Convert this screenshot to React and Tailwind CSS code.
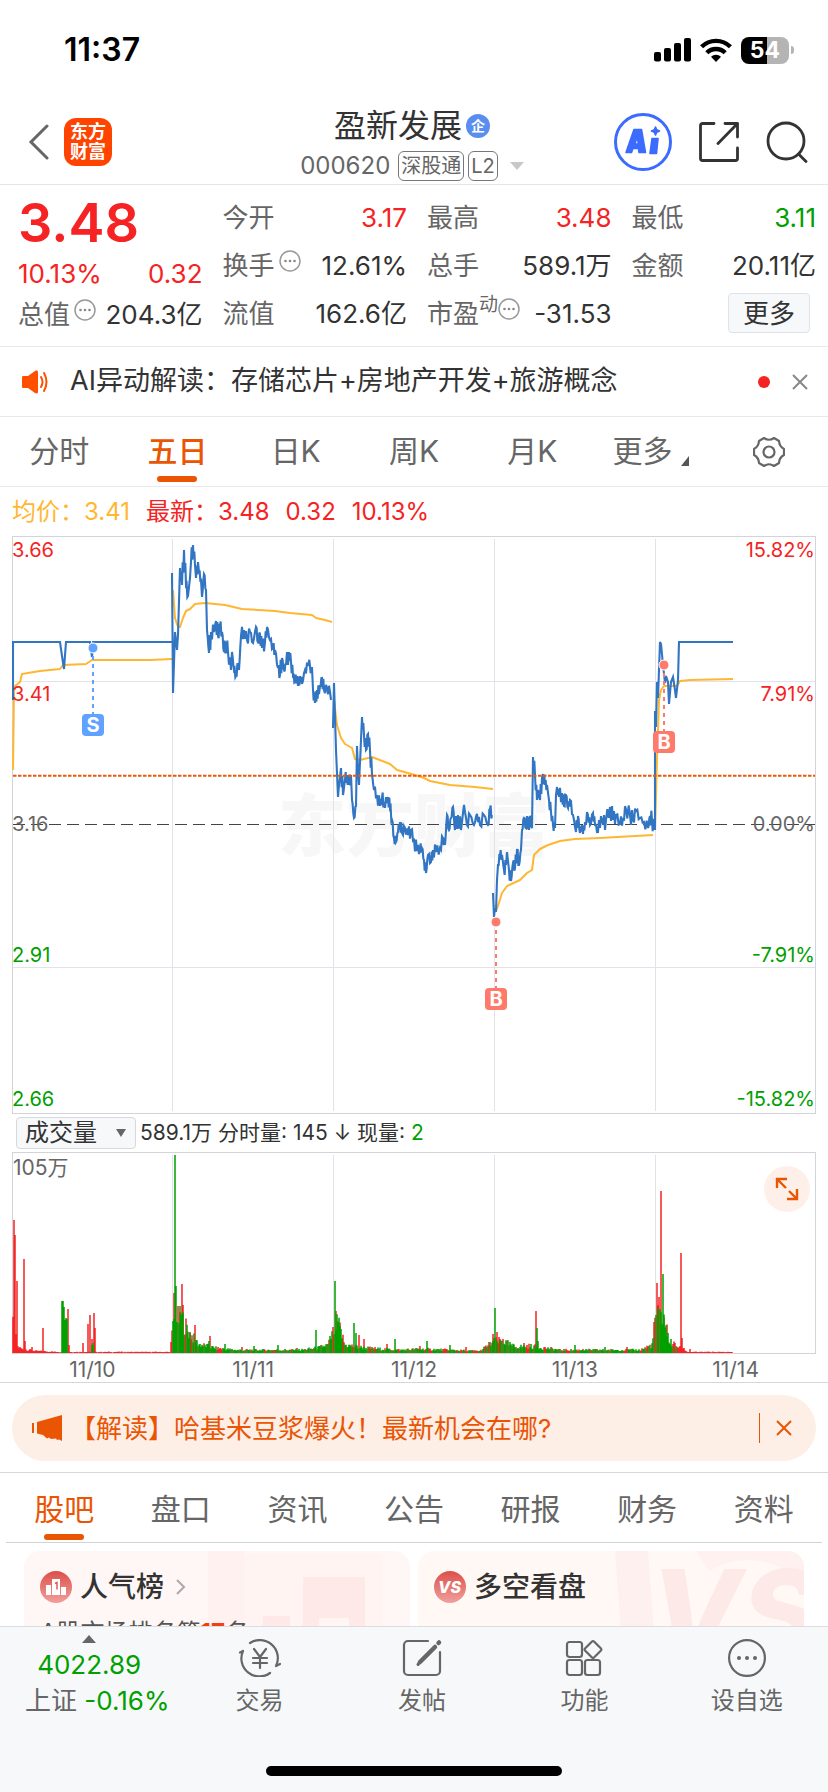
import React from "react";

const quoteColumns = [
  [
    { label: "今开", value: "3.17", tone: "text-[#f52323]" },
    { label: "换手", value: "12.61%", tone: "text-[#333333]", info: true },
    { label: "流值", value: "162.6亿", tone: "text-[#333333]" },
  ],
  [
    { label: "最高", value: "3.48", tone: "text-[#f52323]" },
    { label: "总手", value: "589.1万", tone: "text-[#333333]" },
    { label: "市盈", sup: "动", value: "-31.53", tone: "text-[#333333]", info: true },
  ],
  [
    { label: "最低", value: "3.11", tone: "text-[#00a000]" },
    { label: "金额", value: "20.11亿", tone: "text-[#333333]" },
  ],
];

const sections = ["股吧", "盘口", "资讯", "公告", "研报", "财务", "资料"];
const days = ["11/10", "11/11", "11/12", "11/13", "11/14"];

// price series, one polyline per trading day
const priceDays = [
  {
    noise: 0,
    points:
      "13,700 13,642 60,642 62,656 64,669 66,642 90,642 92,657 93,642 173,642",
  },
  {
    noise: 5,
    points:
      "172,573 173,693 175,632 177,650 178,635 180,568 182,585 184,550 186,585 188,596 190,578 191,562 193,545 195,565 196,578 198,562 199,572 201,580 202,597 204,574 206,590 207,630 209,653 211,632 214,632 216,621 218,636 220,626 222,632 224,652 226,642 228,652 231,670 232,652 234,670 236,676 238,664 239,670 241,636 244,630 247,640 250,632 253,643 256,627 258,642 260,634 262,648 265,642 267,627 270,640 273,648 275,650 278,668 280,675 282,658 284,670 286,665 289,652 291,662 293,676 295,682 297,676 298,686 300,676 302,684 305,670 308,666 312,667 313,690 315,703 317,690 319,694 320,686 322,678 324,690 327,688 330,692 331,700",
  },
  {
    noise: 5,
    points:
      "333,728 334,683 336,750 338,797 339,785 341,768 343,795 345,780 347,775 349,785 351,775 352,800 354,818 356,806 357,746 358,770 359,785 361,740 362,717 364,735 366,750 368,734 370,750 372,775 374,790 377,795 380,806 382,798 384,802 387,803 388,797 390,808 392,820 394,838 396,842 398,832 400,822 402,833 405,828 408,835 411,830 414,840 417,851 420,848 422,848 424,860 426,873 428,855 431,862 433,850 436,852 440,848 443,838 445,845 447,815 449,830 451,818 453,807 455,830 458,815 461,830 464,805 467,825 470,815 474,825 477,814 480,825 484,815 488,825 490,809 492,815",
  },
  {
    noise: 5,
    points:
      "493,893 494,917 495,908 496,912 497,880 498,865 500,855 502,855 504,870 506,865 507,852 509,870 511,881 513,863 515,868 517,850 519,865 521,850 522,830 524,818 526,828 527,816 529,830 530,816 532,828 533,757 535,775 537,800 538,790 540,800 542,778 543,774 545,785 547,785 549,800 551,812 553,825 555,828 556,795 557,787 559,797 562,793 564,806 566,795 568,808 570,800 573,815 576,832 578,816 580,833 582,825 583,834 585,822 588,815 590,825 593,813 595,825 598,832 601,816 603,825 606,820 610,807 613,820 616,815 620,824 623,818 626,809 630,815 633,820 636,811 640,818 644,822 648,828 650,816 652,820 654,830",
  },
  {
    noise: 0,
    points:
      "655,830 655,711 656,727 657,682 658,698 660,642 661,644 663,665 665,683 666,676 668,682 669,704 671,682 673,677 675,690 676,698 678,680 679,642 733,642",
  },
];

const averageDays = [
  "13,770 14,690 15,686 20,682 22,674 40,671 60,669 63,665 86,664 92,660 150,660 172,659",
  "173,590 175,618 178,627 180,627 183,618 186,611 190,609 195,604 205,603 225,605 242,609 275,611 290,613 312,615 316,618 325,620 332,622",
  "334,700 337,725 341,738 345,744 352,748 355,759 360,760 372,757 390,764 397,770 408,773 418,776 424,778 430,781 450,785 475,787 493,789",
  "494,905 497,909 502,893 507,886 520,880 527,873 532,870 534,855 540,849 548,845 560,841 575,839 600,838 653,835",
  "655,830 657,760 659,700 661,690 664,686 677,686 680,681 690,680 733,679",
];

const volumeEnvelope = [
  [13, 26], [18, 6], [22, 4], [36, 2], [60, 1], [170, 1], [174, 34], [182, 34],
  [188, 22], [198, 9], [215, 5], [235, 3], [300, 3], [318, 5], [328, 8],
  [332, 18], [338, 30], [345, 8], [365, 5], [400, 3], [420, 4], [480, 2],
  [493, 11], [502, 12], [515, 6], [530, 7], [545, 5], [560, 3], [640, 3],
  [652, 8], [656, 38], [664, 34], [670, 11], [682, 4], [688, 1], [733, 1],
];

const volumeSpikes = {
  up: [
    [14, 133], [15, 118], [17, 72], [24, 94], [25, 12], [32, 6], [43, 25], [68, 44],
    [69, 8], [83, 10], [88, 29], [90, 38], [92, 14], [94, 40], [95, 25], [174, 60],
    [180, 41], [182, 69], [183, 48], [186, 32], [195, 28], [210, 17], [242, 6],
    [297, 5], [331, 13], [333, 25], [336, 42], [342, 14], [359, 18], [364, 14],
    [387, 9], [420, 7], [466, 6], [493, 19], [497, 21], [500, 14], [503, 14], [524, 10],
    [536, 42], [583, 4], [627, 6], [654, 20], [657, 70], [659, 56], [661, 162],
    [664, 35], [681, 100], [682, 15], [684, 5], [690, 4],
  ],
  down: [
    [62, 52], [63, 52], [64, 46], [65, 33], [66, 35], [67, 34], [92, 8], [93, 10],
    [175, 198], [176, 67], [181, 38], [187, 24], [190, 20], [196, 13], [209, 12],
    [225, 9], [254, 7], [278, 8], [316, 23], [335, 72], [337, 31], [338, 31],
    [340, 27], [354, 30], [356, 20], [395, 14], [427, 12], [450, 8], [495, 45],
    [513, 9], [537, 25], [538, 12], [575, 8], [605, 6], [656, 38], [658, 45],
    [660, 35], [663, 79], [665, 25], [667, 17], [671, 14],
  ],
};

const random = (seed) => {
  const n = Math.sin(seed * 12.9898) * 43758.5453;
  return n - Math.floor(n);
};

const parse = (text) => text.split(" ").map((p) => p.split(",").map(Number));

function pricePath({ points, noise }) {
  const list = parse(points);
  let d = `M${list[0].join(" ")}`;
  list.slice(1).forEach(([x, y], i) => {
    const [px, py] = list[i];
    if (noise && x - px > 1 && i > 4) {
      const swing = (random(x) > 0.5 ? 1 : -1) * noise * (0.5 + random(y));
      d += `L${(px * 2 + x) / 3} ${(py + y) / 2 + swing}`;
      d += `L${(px + x * 2) / 3} ${(py + y) / 2 - swing}`;
    }
    d += `L${x} ${y}`;
  });
  return d;
}

function volumePaths() {
  let up = "";
  let down = "";
  for (let i = 1; i < volumeEnvelope.length; i++) {
    const [x0, h0] = volumeEnvelope[i - 1];
    const [x1, h1] = volumeEnvelope[i];
    for (let x = x0; x < x1; x++) {
      const level = h0 + ((h1 - h0) * (x - x0)) / (x1 - x0);
      const bar = `M${x} 1353v-${(level * (0.6 + random(x) * 0.8)).toFixed(1)}`;
      const quiet = x < 173 || x > 676;
      if (quiet || random(x * 3 + 1) > 0.6) up += bar;
      else down += bar;
    }
  }
  volumeSpikes.up.forEach(([x, h]) => (up += `M${x} 1353v-${h}`));
  volumeSpikes.down.forEach(([x, h]) => (down += `M${x} 1353v-${h}`));
  return { up, down };
}

const InfoDot = () => (
  <svg className="mb-2 h-[22px] w-[22px] shrink-0" viewBox="0 0 22 22" fill="none">
    <circle cx="11" cy="11" r="10" stroke="#999999" strokeWidth="1.5" />
    <g fill="#888888">
      <circle cx="6.5" cy="11" r="1.3" />
      <circle cx="11" cy="11" r="1.3" />
      <circle cx="15.5" cy="11" r="1.3" />
    </g>
  </svg>
);

const Marker = ({ x, dotY, boxY, letter, color }) => (
  <g>
    <path d={`M${x} ${dotY}V${boxY}`} stroke={color} strokeWidth="2" strokeDasharray="4 4" />
    <circle cx={x} cy={dotY} r="5" fill={color} stroke="#ffffff" strokeWidth="1" />
    <rect x={x - 11} y={boxY} width="22" height="22" rx="4" fill={color} />
    <text x={x} y={boxY + 18} textAnchor="middle" fontSize="20" fontWeight="700" fill="#ffffff">
      {letter}
    </text>
  </g>
);

const PriceChart = () => (
  <svg className="block w-full" viewBox="12 536 804 578" fill="none">
    <g fontFamily="'Noto Sans CJK SC', sans-serif" fontWeight="900" fontSize="68" fill="#f7f7f7">
      <text x="414" y="851" textAnchor="middle">东方财富</text>
    </g>
    <path
      d="M172.5 539V1111M333.5 539V1111M494.5 539V1111M655.5 539V1111M13 681.5H815M13 967.5H815"
      stroke="#e2e2ea"
    />
    <rect x="12.5" y="536.5" width="803" height="577" stroke="#d2d4da" />
    <path d="M13 824.5H815" stroke="#444444" strokeDasharray="12 6" />
    {averageDays.map((points) => (
      <polyline key={points} points={points} stroke="#ffb732" strokeWidth="2" strokeLinejoin="round" />
    ))}
    {priceDays.map((day) => (
      <path key={day.points} d={pricePath(day)} stroke="#3276c3" strokeWidth="2.1" />
    ))}
    <path d="M13 775.8H815" stroke="#e8590c" strokeWidth="2" strokeDasharray="3.5 1.5" />
    <g fontFamily="Inter, sans-serif">
      <Marker x={93} dotY={648} boxY={714} letter="S" color="#5fa2ff" />
      <Marker x={664} dotY={665} boxY={731} letter="B" color="#ff7a6b" />
      <Marker x={496} dotY={922} boxY={988} letter="B" color="#ff7a6b" />
      <g fontSize="20" fill="#f52323">
        <text x="12" y="557">3.66</text>
        <text x="12" y="701">3.41</text>
        <text x="815" y="557" textAnchor="end">15.82%</text>
        <text x="815" y="701" textAnchor="end">7.91%</text>
      </g>
      <g fontSize="20" fill="#666666">
        <text x="12" y="831">3.16</text>
        <text x="815" y="831" textAnchor="end">0.00%</text>
      </g>
      <g fontSize="20" fill="#00a000">
        <text x="12" y="962">2.91</text>
        <text x="12" y="1106">2.66</text>
        <text x="815" y="962" textAnchor="end">-7.91%</text>
        <text x="815" y="1106" textAnchor="end">-15.82%</text>
      </g>
    </g>
  </svg>
);

const VolumeChart = () => {
  const { up, down } = volumePaths();
  return (
    <div className="relative">
      <svg className="block w-full" viewBox="12 1152 804 202" fill="none">
        <path d="M172.5 1155V1353M333.5 1155V1353M494.5 1155V1353M655.5 1155V1353" stroke="#e2e2ea" />
        <rect x="12.5" y="1152.5" width="803" height="201" stroke="#d2d4da" />
        <path d={up} stroke="#f52323" strokeWidth="1.5" />
        <path d={down} stroke="#00a000" strokeWidth="1.5" />
        <text x="13" y="1175" fontSize="21" fill="#666666" fontFamily="Inter, 'Noto Sans CJK SC', sans-serif">
          105万
        </text>
      </svg>
      <button
        aria-label="全屏"
        className="absolute top-3.5 right-1.5 flex h-[46px] w-[46px] items-center justify-center rounded-full bg-[#fef0e9]"
      >
        <svg className="h-6 w-6" viewBox="0 0 24 24" fill="none" stroke="#ea5504" strokeWidth="2.4">
          <path d="M2 11V2h10M2 2l9 9M14 14l8 8M22 12v10H12" />
        </svg>
      </button>
    </div>
  );
};

const StatusBar = () => (
  <div className="flex h-[100px] shrink-0 items-center justify-between pr-[34px] pl-16 text-black">
    <span className="text-[32px] font-semibold">11:37</span>
    <div className="flex items-center gap-[9px]">
      <svg className="h-6 w-[37px]" viewBox="0 0 37 24" fill="currentColor">
        <rect x="0" y="14" width="7" height="9.5" rx="2" />
        <rect x="10" y="10" width="7" height="13.5" rx="2" />
        <rect x="20" y="5" width="7" height="18.5" rx="2" />
        <rect x="30" y="0" width="7" height="23.5" rx="2" />
      </svg>
      <svg className="h-6 w-8" viewBox="0 0 32 24" fill="none" stroke="currentColor" strokeWidth="4.4">
        <path d="M1.6 8.8a20.4 20.4 0 0 1 28.8 0" />
        <path d="M6.8 14.8a13 13 0 0 1 18.4 0" />
        <path d="M16 24l-5-5.2a7 7 0 0 1 10 0z" fill="currentColor" stroke="none" />
      </svg>
      <div className="flex items-center">
        <div className="flex h-[27px] w-12 items-center justify-center rounded-lg bg-linear-to-r from-black from-54% to-[#b4b4b4] to-54% text-[23px] font-bold text-white">
          54
        </div>
        <div className="ml-0.5 h-2 w-[3px] rounded-r-full bg-[#b4b4b4]"></div>
      </div>
    </div>
  </div>
);

const Header = () => (
  <header className="grid h-[85px] shrink-0 grid-cols-[1fr_auto_1fr] items-center border-b border-[#e6e6e6] px-5 pb-2.5">
    <div className="flex items-center gap-3.5 pl-2">
      <button aria-label="返回">
        <svg className="h-9 w-[22px]" viewBox="0 0 22 36" fill="none" stroke="#666666" strokeWidth="3" strokeLinecap="round">
          <path d="M19 2L3 18l16 16" />
        </svg>
      </button>
      <div className="flex h-12 w-12 items-center justify-center rounded-xl bg-[#ff4400] text-center text-[18px] leading-5 font-bold text-white">
        东方
        <br />
        财富
      </div>
    </div>
    <div className="flex flex-col items-center pt-1 pr-1">
      <div className="flex items-center gap-1">
        <h1 className="text-[32px] leading-11 text-[#333333]">盈新发展</h1>
        <span className="flex h-6 w-6 items-center justify-center rounded-full bg-[#5b8def] text-[14px] leading-6 font-bold text-white">
          企
        </span>
      </div>
      <div className="flex h-9 items-center gap-1 text-[24px] text-[#666666]">
        <span className="mr-1">000620</span>
        <span className="flex h-[30px] items-center rounded-md border border-[#777777] px-0.5 text-[20px]">深股通</span>
        <span className="flex h-[30px] items-center rounded-md border border-[#777777] px-0.5 text-[20px]">L2</span>
        <svg className="ml-2 h-2 w-3.5" viewBox="0 0 14 8" fill="#c8c8c8">
          <path d="M0 0h14L7 8z" />
        </svg>
      </div>
    </div>
    <div className="flex items-center justify-end gap-[27px]">
      <button aria-label="Ai">
        <svg className="h-[58px] w-[58px]" viewBox="0 0 58 58" fill="none">
          <circle cx="29" cy="29" r="27.5" stroke="#3b6bff" strokeWidth="3" />
          <g fill="#3b6bff" stroke="#3b6bff" strokeWidth="1.6" strokeLinejoin="round">
            <path
              fillRule="evenodd"
              d="M20 16.500h7.500l4 23h-6.500l-.6-4h-5.500l-1.400 4h-5.500zM23.500 23l-2.600 8h3.300z"
            />
            <path d="M38 25.500h6l-1.500 15h-6.500z" />
            <path d="M41.500 14l1.200 2.800 2.800 1.200-2.800 1.200-1.200 2.800-1.200-2.800-2.800-1.200 2.800-1.200z" />
          </g>
        </svg>
      </button>
      <button aria-label="分享">
        <svg className="h-10 w-10" viewBox="0 0 40 40" fill="none" stroke="#333333" strokeWidth="2.8" strokeLinecap="round" strokeLinejoin="round">
          <path d="M15 1.500H3.500a2 2 0 0 0-2 2v33a2 2 0 0 0 2 2h33a2 2 0 0 0 2-2V26M26 1.500h12.500V15M38.500 1.500L19 21.500" />
        </svg>
      </button>
      <button aria-label="搜索">
        <svg className="h-[42px] w-[42px]" viewBox="0 0 42 42" fill="none" stroke="#333333" strokeWidth="2.8" strokeLinecap="round">
          <circle cx="20" cy="20" r="18" />
          <path d="M32.500 33l7.500 7.500" />
        </svg>
      </button>
    </div>
  </header>
);

const Quote = () => (
  <section className="grid shrink-0 grid-cols-4 gap-5 border-b border-[#e9e9e9] pt-2 pr-3 pb-[9px] pl-[18px] text-[26px]">
    <div>
      <div className="flex h-[58px] items-center text-[54px] font-semibold text-[#f52323]">3.48</div>
      <div className="flex h-11 items-center justify-between text-[#f52323]">
        <span>10.13%</span>
        <span>0.32</span>
      </div>
      <div className="flex h-[38px] items-center justify-between whitespace-nowrap">
        <span className="flex items-center gap-1 text-[#666666]">
          总值
          <InfoDot />
        </span>
        <span className="text-[#333333]">204.3亿</span>
      </div>
    </div>
    {quoteColumns.map((column, i) => (
      <div key={i}>
        {column.map((item) => (
          <div key={item.label} className="flex h-12 items-center justify-between whitespace-nowrap">
            <span className="flex items-center gap-1 text-[#666666]">
              {item.label}
              {item.sup && <span className="-mr-1 -ml-1 mb-4 text-[19px]">{item.sup}</span>}
              {item.info && <InfoDot />}
            </span>
            <span className={item.tone}>{item.value}</span>
          </div>
        ))}
        {i === 2 && (
          <div className="flex h-12 items-center justify-end pr-1.5">
            <button className="h-10 w-[82px] rounded border border-[#dfe2e8] bg-[#f7f8fa] text-[#333333]">更多</button>
          </div>
        )}
      </div>
    ))}
  </section>
);

const Notice = () => (
  <div className="flex h-[70px] shrink-0 items-center border-b border-[#e9e9e9] pr-5 pl-[22px]">
    <svg className="h-8 w-7" viewBox="0 0 28 32" fill="#ff5000">
      <path d="M1 10h5l7-5c2-1 3 0 3 1v20c0 1-1 2-3 1l-7-5H1c-1 0-1-1-1-2v-8c0-1 0-2 1-2z" />
      <path d="M19 11q3 5 0 10M22 7q5 9 0 18" fill="none" stroke="#ff5000" strokeWidth="2" strokeLinecap="round" />
    </svg>
    <p className="ml-5 flex-1 text-[27px] text-[#333333]">AI异动解读：存储芯片+房地产开发+旅游概念</p>
    <span className="mr-[22px] h-3 w-3 rounded-full bg-[#f52323]"></span>
    <button aria-label="关闭">
      <svg className="block h-4 w-4" viewBox="0 0 16 16" stroke="#888888" strokeWidth="2">
        <path d="M1 1l14 14M15 1L1 15" />
      </svg>
    </button>
  </div>
);

const PeriodTabs = () => (
  <nav className="grid h-[70px] shrink-0 grid-cols-7 items-center justify-items-center border-b border-[#e9e9e9] text-[30px] text-[#666666]">
    <button>分时</button>
    <button className="relative font-medium text-[#ea5504]">
      五日
      <span className="absolute inset-x-2.5 -bottom-2 h-1.5 rounded-full bg-[#ea5504]"></span>
    </button>
    <button>日K</button>
    <button>周K</button>
    <button>月K</button>
    <button className="flex items-end gap-2">
      更多
      <svg className="mb-2 h-2.5 w-2" viewBox="0 0 8 10" fill="#555555">
        <path d="M8 0v10H0z" />
      </svg>
    </button>
    <button aria-label="设置">
      <svg className="block h-8 w-8" viewBox="0 0 32 32" fill="none" stroke="#666666" strokeWidth="2.2" strokeLinejoin="round">
        <path d="M11 2q5 3.500 10 0l5 3q.3 5.500 5 8v6q-4.700 2.500-5 8l-5 3q-5-3.500-10 0l-5-3q-.3-5.500-5-8v-6q4.700-2.500 5-8z" />
        <circle cx="16" cy="16" r="5.500" />
      </svg>
    </button>
  </nav>
);

const Banner = () => (
  <div className="shrink-0 border-y border-[#d6d7dc] px-3 pt-3 pb-[11px]">
    <div className="flex h-[66px] items-center rounded-full bg-[#fdeee6] pr-6 pl-5 text-[#ea5504]">
      <svg className="h-[26px] w-[30px]" viewBox="0 0 30 26" fill="currentColor">
        <path d="M0 8h2v10H0zM5 7L30 0v26l-3-1.500-2 .5-1-1.500-5 .5-2-1.500-2 1-4-3.500-6-1.500z" />
      </svg>
      <p className="ml-2 flex-1 text-[26px]">
        【解读】哈基米豆浆爆火！最新机会在哪?
      </p>
      <span className="mr-4 h-[30px] w-px bg-[#ea5504]"></span>
      <button aria-label="关闭">
        <svg className="block h-4 w-4" viewBox="0 0 16 16" stroke="currentColor" strokeWidth="2">
          <path d="M1 1l14 14M15 1L1 15" />
        </svg>
      </button>
    </div>
  </div>
);

const Cards = () => (
  <div className="grid min-h-0 flex-1 grid-cols-2 gap-2 overflow-hidden px-6 pt-2">
    <div className="relative h-40 overflow-hidden rounded-2xl bg-[#fff7f5] pt-5 pl-4">
      <svg className="absolute top-0 right-0 h-40 w-[210px]" viewBox="0 0 210 160">
        <path d="M8 0h36v160H8z" fill="#fff1f0" />
        <path d="M44 3h139v157H44z" fill="#fff4f2" />
        <path d="M103 26h62v134h-62zM63 65h27v95H63z" fill="#fee9e8" />
        <path d="M119 67h30v93h-30z" fill="#fff5f3" />
      </svg>
      <div className="relative flex h-8 items-center">
        <svg className="h-8 w-8" viewBox="0 0 32 32">
          <defs>
            <linearGradient id="badge" x1="0" y1="0" x2="0" y2="1">
              <stop offset="0" stopColor="#dc4f4a" />
              <stop offset="1" stopColor="#f0a09c" />
            </linearGradient>
          </defs>
          <circle cx="16" cy="16" r="16" fill="url(#badge)" />
          <path d="M6 14h5v10H6zM12 8h8v16h-8zM21 16h5v8h-5z" fill="#ffffff" />
          <path d="M15 12.500l2-1v7" fill="none" stroke="#df5d58" strokeWidth="1.5" />
        </svg>
        <h2 className="ml-2 text-[28px] font-medium text-[#333333]">人气榜</h2>
        <svg className="ml-3 h-4 w-2.5" viewBox="0 0 10 16" fill="none" stroke="#aaaaaa" strokeWidth="2">
          <path d="M1 1l7 7-7 7" />
        </svg>
      </div>
      <p className="relative mt-3.5 text-[24px] leading-8 text-[#555555]">
        A股市场排名第<b className="text-[#f04010]">17</b>名
      </p>
    </div>
    <div className="relative h-40 overflow-hidden rounded-2xl bg-[#fff8f5] pt-5 pl-4">
      <svg className="absolute top-0 right-0 h-40 w-[200px]" viewBox="0 0 200 160">
        <path d="M11 0h33l12 160H23z" fill="#fef0ee" />
        <path d="M92 0h108v30Q150-6 105 20z" fill="#fef1ef" />
        <text x="46" y="104" fontSize="118" fontWeight="800" fontStyle="italic" fontFamily="Inter, sans-serif" fill="#fde9e7">
          VS
        </text>
      </svg>
      <div className="relative flex h-8 items-center">
        <svg className="h-8 w-8" viewBox="0 0 32 32">
          <circle cx="16" cy="16" r="16" fill="url(#badge)" />
          <text x="15.500" y="22" textAnchor="middle" fontSize="16" fontWeight="800" fontStyle="italic" fontFamily="Inter, sans-serif" fill="#ffffff">
            VS
          </text>
        </svg>
        <h2 className="ml-2 text-[28px] font-medium text-[#333333]">多空看盘</h2>
      </div>
    </div>
  </div>
);

const BottomItem = ({ label, children }) => (
  <button className="flex flex-col items-center gap-1.5 pt-3 text-[24px] leading-9 text-[#666666]">
    <svg className="h-[38px] w-11" viewBox="0 0 44 38" fill="none" stroke="#666666" strokeWidth="2.2" strokeLinecap="round" strokeLinejoin="round">
      {children}
    </svg>
    {label}
  </button>
);

const BottomBar = () => (
  <footer className="flex h-[166px] shrink-0 flex-col justify-between border-t border-[#dcdde1] bg-[#f7f8fa] pb-4">
    <nav className="grid grid-cols-5 pl-4">
      <div className="flex flex-col items-center pt-2 text-[26px] leading-9 whitespace-nowrap text-[#00a000]">
        <svg className="mr-4 h-2 w-3.5" viewBox="0 0 14 8" fill="#666666">
          <path d="M7 0l7 8H0z" />
        </svg>
        <span className="mt-1 mr-4">4022.89</span>
        <span>
          <span className="text-[#666666]">上证</span> -0.16%
        </span>
      </div>
      <BottomItem label="交易">
        <path d="M12 4A18 18 0 0 1 38 27M32 34A18 18 0 0 1 5 12M38 27l4-2M5 12l-3 1.500" />
        <path d="M16 10l6 8 6-8M22 18v11M15 19h14M15 24h14" />
      </BottomItem>
      <BottomItem label="发帖">
        <path d="M28 2H8a4 4 0 0 0-4 4v26a4 4 0 0 0 4 4h28a4 4 0 0 0 4-4V13" />
        <path d="M35 8L20 23M38.500 4l.5-.5" strokeWidth="4.500" />
        <path d="M20 23l-2 2.500" strokeWidth="3" />
      </BottomItem>
      <BottomItem label="功能">
        <rect x="5" y="3" width="15" height="15" rx="2.500" />
        <rect x="5" y="21" width="15" height="15" rx="2.500" />
        <rect x="23" y="21" width="15" height="15" rx="2.500" />
        <path d="M30 2.500q1-1 2 0l7 7q1 1 0 2l-7 7q-1 1-2 0l-7-7q-1-1 0-2z" />
      </BottomItem>
      <BottomItem label="设自选">
        <circle cx="22" cy="19" r="17.900" />
        <path d="M14 19h.01M22 19h.01M30 19h.01" strokeWidth="4" />
      </BottomItem>
    </nav>
    <div className="mx-auto h-2.5 w-[296px] rounded-full bg-black"></div>
  </footer>
);

const App = () => {
  return (
    <div className="flex h-screen flex-col overflow-hidden bg-white font-[Inter,'Noto_Sans_CJK_SC',sans-serif]">
      <StatusBar />
      <Header />
      <Quote />
      <Notice />
      <PeriodTabs />
      <section className="shrink-0 px-3">
        <div className="flex h-[49px] items-center gap-4 text-[24px] text-[#f52323]">
          <span className="text-[#ffb732]">均价：3.41</span>
          <span>最新：3.48</span>
          <span>0.32</span>
          <span>10.13%</span>
        </div>
        <PriceChart />
        <div className="flex h-[38px] items-center pl-1 text-[21px] text-[#333333]">
          <div className="relative">
            <select
              aria-label="指标"
              className="h-8 w-[120px] appearance-none rounded border border-[#d6dae0] bg-[#f7f8fa] pl-2 text-[24px] leading-7"
            >
              <option>成交量</option>
            </select>
            <svg className="pointer-events-none absolute top-3 right-2.5 h-2 w-2.5" viewBox="0 0 10 8" fill="#666666">
              <path d="M0 0h10L5 8z" />
            </svg>
          </div>
          <span className="ml-1">
            589.1万 分时量: 145 ↓ 现量: <span className="text-[#00a000]">2</span>
          </span>
        </div>
        <VolumeChart />
        <div className="grid h-7 grid-cols-5 items-center text-center text-[21px] text-[#666666]">
          {days.map((day) => (
            <span key={day}>{day}</span>
          ))}
        </div>
      </section>
      <Banner />
      <nav className="mx-1.5 grid h-[70px] shrink-0 grid-cols-7 items-center border-b border-[#d0d2d8] pt-1 text-[30px] text-[#666666]">
        {sections.map((name, i) => (
          <button key={name} className={i === 0 ? "relative text-[#ea5504]" : ""}>
            {name}
            {i === 0 && (
              <span className="absolute -bottom-2 left-1/2 h-1.5 w-10 -translate-x-1/2 rounded-full bg-[#ea5504]"></span>
            )}
          </button>
        ))}
      </nav>
      <Cards />
      <BottomBar />
    </div>
  );
};

export default App;
